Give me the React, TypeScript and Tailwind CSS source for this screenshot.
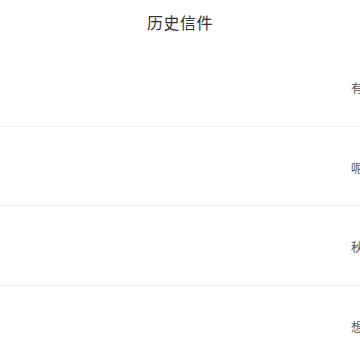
import React from "react";

const rows = ["有一封信", "呢喃的话", "秋天的信", "想念你"];

export default function App() {
  return (
    <div
      className="w-[360px] h-[360px] overflow-hidden bg-white"
      style={{ fontFamily: '"Noto Sans CJK SC", "Noto Sans", sans-serif' }}
    >
      <div className="h-[47px] flex items-center justify-center pb-[4px]">
        <span className="text-[16px] text-[#333333] tracking-[0.5px]">历史信件</span>
      </div>
      <div className="flex flex-col">
        {rows.map((t, i) => (
          <div
            key={i}
            className="h-[79.5px] flex items-center pt-[4px] border-b border-[#f0f0f0] overflow-hidden whitespace-nowrap"
          >
            <div className="w-[351px] shrink-0" />
            <span className="text-[12px] text-[#555555] shrink-0">{t}</span>
          </div>
        ))}
      </div>
    </div>
  );
}
